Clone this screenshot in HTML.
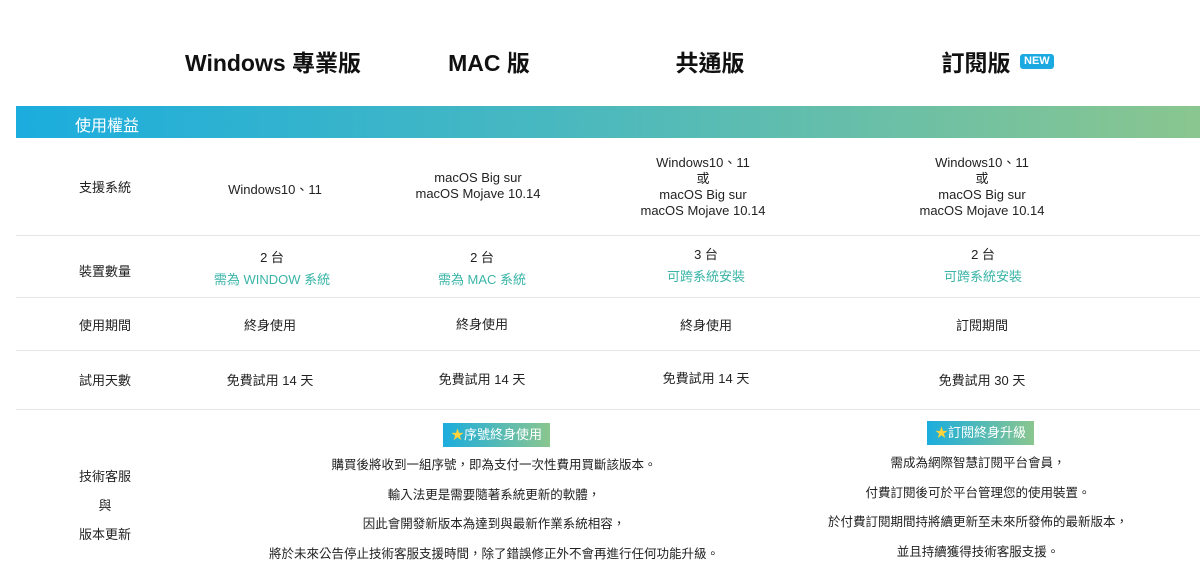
<!DOCTYPE html>
<html><head><meta charset="utf-8"><style>
body{margin:0;width:1200px;height:588px;background:#fff;position:relative;overflow:hidden;font-family:"Liberation Sans","Noto Sans CJK TC",sans-serif;color:#222}
.a{position:absolute;text-align:center;transform:translateX(-50%);white-space:nowrap}
.h{font-size:23px;font-weight:bold;color:#111;top:44px}
.t{font-size:13px;line-height:16px}
.g{color:#3bb5a8}
.l{position:absolute;left:16px;right:0;height:1px;background:#e6e6e6}
.band{position:absolute;left:16px;right:0;top:106px;height:32px;background:linear-gradient(90deg,#1badde,#48b8c0 45%,#8ac68f)}
.badge{position:absolute;font-size:13px;color:#fff;background:linear-gradient(90deg,#1badde,#8ac68f);padding:4px 8px;line-height:16px}
.p{font-size:12.5px;line-height:29.5px}
</style></head><body>
<div class="a h" style="left:273px">Windows 專業版</div>
<div class="a h" style="left:489px">MAC 版</div>
<div class="a h" style="left:710px">共通版</div>
<div class="a h" style="left:976px">訂閱版</div>
<div style="position:absolute;left:1020px;top:54px;background:#1aa9e0;color:#fff;font-size:11px;font-weight:bold;padding:1px 4px;border-radius:3px;line-height:13px">NEW</div>
<div class="band"><span style="position:absolute;left:59px;top:6px;color:#fff;font-size:16px">使用權益</span></div>

<div class="a t" style="left:105px;top:180px">支援系統</div>
<div class="a t" style="left:275px;top:182px">Windows10、11</div>
<div class="a t" style="left:478px;top:170px">macOS Big sur<br>macOS Mojave 10.14</div>
<div class="a t" style="left:703px;top:155px">Windows10、11<br>或<br>macOS Big sur<br>macOS Mojave 10.14</div>
<div class="a t" style="left:982px;top:155px">Windows10、11<br>或<br>macOS Big sur<br>macOS Mojave 10.14</div>
<div class="l" style="top:235px"></div>

<div class="a t" style="left:105px;top:264px">裝置數量</div>
<div class="a t" style="left:272px;top:250px">2 台<br><span class="g" style="line-height:28px">需為 WINDOW 系統</span></div>
<div class="a t" style="left:482px;top:250px">2 台<br><span class="g" style="line-height:28px">需為 MAC 系統</span></div>
<div class="a t" style="left:706px;top:247px">3 台<br><span class="g" style="line-height:28px">可跨系統安裝</span></div>
<div class="a t" style="left:983px;top:247px">2 台<br><span class="g" style="line-height:28px">可跨系統安裝</span></div>
<div class="l" style="top:297px"></div>

<div class="a t" style="left:105px;top:318px">使用期間</div>
<div class="a t" style="left:270px;top:318px">終身使用</div>
<div class="a t" style="left:482px;top:317px">終身使用</div>
<div class="a t" style="left:706px;top:318px">終身使用</div>
<div class="a t" style="left:982px;top:318px">訂閱期間</div>
<div class="l" style="top:350px"></div>

<div class="a t" style="left:105px;top:373px">試用天數</div>
<div class="a t" style="left:270px;top:373px">免費試用 14 天</div>
<div class="a t" style="left:482px;top:372px">免費試用 14 天</div>
<div class="a t" style="left:706px;top:371px">免費試用 14 天</div>
<div class="a t" style="left:982px;top:373px">免費試用 30 天</div>
<div class="l" style="top:409px"></div>

<div class="a t" style="left:105px;top:462px;line-height:29px">技術客服<br>與<br>版本更新</div>
<div class="badge" style="left:443px;top:423px"><span style="color:#ffd43b">★</span>序號終身使用</div>
<div class="a p" style="left:494px;top:451px">購買後將收到一組序號，即為支付一次性費用買斷該版本。<br>輸入法更是需要隨著系統更新的軟體，<br>因此會開發新版本為達到與最新作業系統相容，<br>將於未來公告停止技術客服支援時間，除了錯誤修正外不會再進行任何功能升級。</div>
<div class="badge" style="left:927px;top:421px"><span style="color:#ffd43b">★</span>訂閱終身升級</div>
<div class="a p" style="left:978px;top:449px">需成為網際智慧訂閱平台會員，<br>付費訂閱後可於平台管理您的使用裝置。<br>於付費訂閱期間持將續更新至未來所發佈的最新版本，<br>並且持續獲得技術客服支援。</div>
</body></html>
